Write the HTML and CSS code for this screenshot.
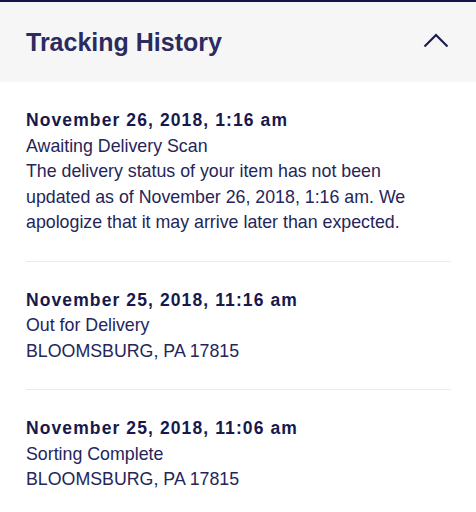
FILE: index.html
```html
<!DOCTYPE html>
<html lang="en">
<head>
    <meta charset="UTF-8">
    <meta name="viewport" content="width=device-width, initial-scale=1.0">
    <title>Tracking History</title>
    <link rel="stylesheet" href="styles.css">
</head>
<body>
    <section class="tracking">
        <header class="tracking-header">
            <h2>Tracking History</h2>
            <svg class="chevron" width="26" height="15" viewBox="0 0 26 15">
                <path d="M1.5 13.5 L13 2 L24.5 13.5" fill="none" stroke="#1d1d50" stroke-width="2.2"/>
            </svg>
        </header>
        <ul class="events">
            <li class="event">
                <div class="event-date">November 26, 2018, 1:16 am</div>
                <div class="event-text">Awaiting Delivery Scan</div>
                <div class="event-text">The delivery status of your item has not been updated as of November 26, 2018, 1:16 am. We apologize that it may arrive later than expected.</div>
            </li>
            <li class="event">
                <div class="event-date">November 25, 2018, 11:16 am</div>
                <div class="event-text">Out for Delivery</div>
                <div class="event-text">BLOOMSBURG, PA 17815</div>
            </li>
            <li class="event">
                <div class="event-date">November 25, 2018, 11:06 am</div>
                <div class="event-text">Sorting Complete</div>
                <div class="event-text">BLOOMSBURG, PA 17815</div>
            </li>
        </ul>
    </section>
</body>
</html>
```

FILE: styles.css
```css
body {
    font-family: "Liberation Sans", Arial, sans-serif;
    margin: 0;
    padding: 0;
    background-color: #fff;
}

.tracking {
    border-top: 2px solid #14144a;
}

.tracking-header {
    display: flex;
    align-items: center;
    justify-content: space-between;
    height: 80px;
    padding: 0 27px 0 26px;
    background-color: #f6f6f7;
}

.tracking-header h2 {
    margin: 0;
    font-size: 25px;
    line-height: 30px;
    font-weight: bold;
    color: #2b2b5f;
}

.chevron {
    display: block;
    margin-top: -4px;
}

.events {
    list-style-type: none;
    margin: 0;
    padding: 0 25px 0 26px;
}

.event {
    padding: 26px 0 25px;
    border-bottom: 1px solid #ebebee;
}

.event:last-child {
    border-bottom: none;
}

.event-date {
    font-size: 17.5px;
    line-height: 25.5px;
    font-weight: bold;
    letter-spacing: 1.1px;
    color: #18184c;
}

.event-text {
    padding-right: 35px;
    font-size: 17.8px;
    line-height: 25.5px;
    color: #25255a;
}
```
